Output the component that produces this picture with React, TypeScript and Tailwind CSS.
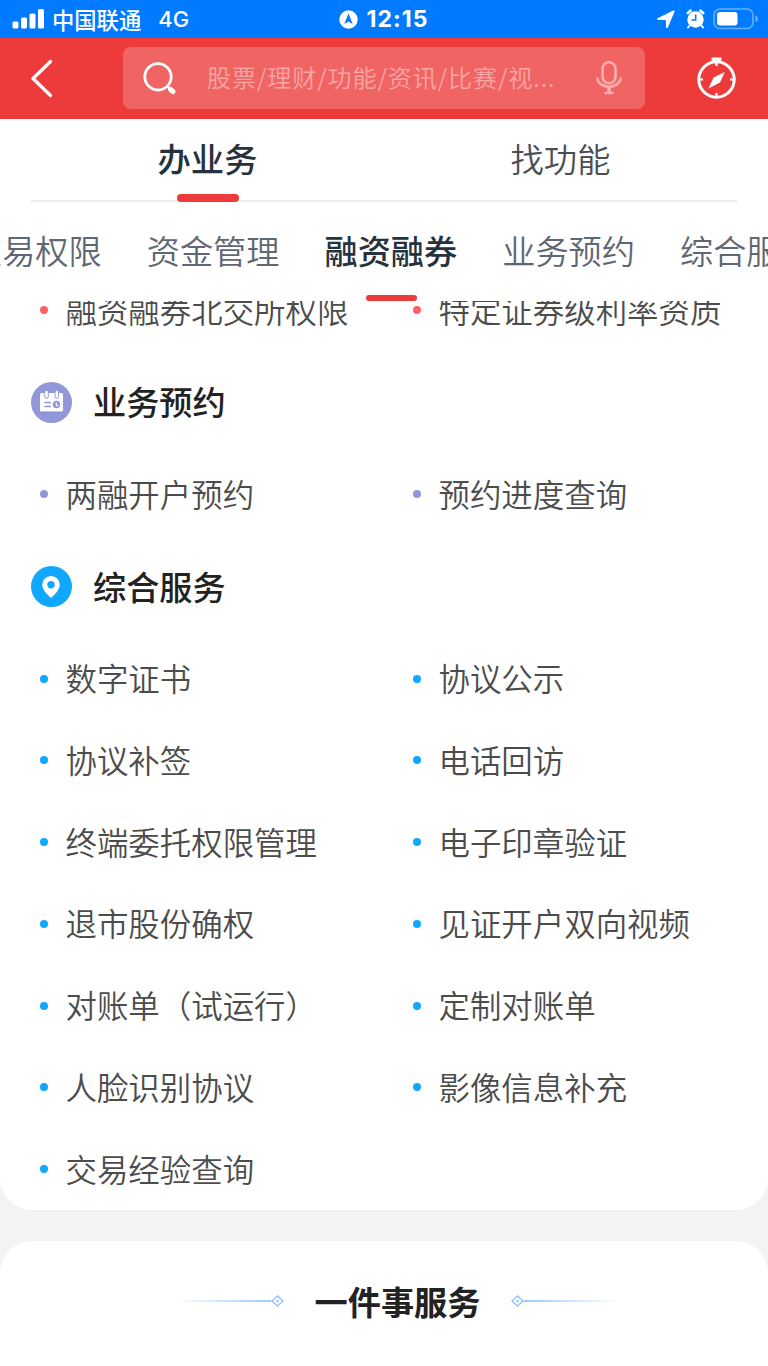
import clsx from "clsx"

type Section = {
  title: string
  dot: string
  icon: React.ReactNode
  items: string[]
}

const categories = ["交易权限", "资金管理", "融资融券", "业务预约", "综合服务"]

const CalendarIcon = () => (
  <svg width="41" height="41" viewBox="0 0 41 41" fill="none">
    <circle cx="20.5" cy="20.5" r="20.5" fill="#9197d8" />
    <rect x="10" y="13" width="22" height="18" rx="1.5" fill="#7c82c8" opacity="0.5" />
    <rect x="9" y="11" width="23" height="18.5" rx="1.5" fill="#fff" />
    <path d="M15.5 11v3.500M25.800 11v3.500" stroke="#9197d8" strokeWidth="4.400" strokeLinecap="round" />
    <path d="M15.500 10v4.500M25.800 10v4.500" stroke="#fff" strokeWidth="2.600" strokeLinecap="round" />
    <path d="M14 20.500h5.200M14 24.500h5.200" stroke="#9197d8" strokeWidth="1.700" strokeLinecap="round" />
    <circle cx="25.500" cy="22.500" r="3.700" fill="#9197d8" />
    <path d="M25.200 20.300v2.400l1.900 1.500" stroke="#fff" strokeWidth="1.100" />
  </svg>
)

const PinIcon = () => (
  <svg width="41" height="41" viewBox="0 0 41 41" fill="none">
    <circle cx="20.500" cy="20.500" r="20.500" fill="#10a8fe" />
    <path d="M20 32c-2.200-2-8.800-8-8.800-13.300a8.800 8.800 0 0 1 17.600 0C28.800 24 22.200 30 20 32z" fill="#fff" />
    <circle cx="20" cy="18.700" r="3.700" fill="#10a8fe" />
  </svg>
)

const sections: Section[] = [
  {
    title: "业务预约",
    dot: "bg-[#9197d8]",
    icon: <CalendarIcon />,
    items: ["两融开户预约", "预约进度查询"],
  },
  {
    title: "综合服务",
    dot: "bg-[#10a8fe]",
    icon: <PinIcon />,
    items: [
      "数字证书",
      "协议公示",
      "协议补签",
      "电话回访",
      "终端委托权限管理",
      "电子印章验证",
      "退市股份确权",
      "见证开户双向视频",
      "对账单（试运行）",
      "定制对账单",
      "人脸识别协议",
      "影像信息补充",
      "交易经验查询",
    ],
  },
]

function StatusBar() {
  return (
    <div className="grid h-[38px] grid-cols-3 items-center bg-[#007aff] text-white">
      <div className="flex items-center pl-3">
        <svg width="32" height="20" viewBox="0 0 32 20" fill="#fff">
          <rect x="0.500" y="12.500" width="6" height="7" rx="1.500" />
          <rect x="9" y="8.500" width="6" height="11" rx="1.500" />
          <rect x="17.500" y="4.500" width="6" height="15" rx="1.500" />
          <rect x="26" y="0" width="6" height="19.500" rx="1.500" />
        </svg>
        <span className="ml-2 text-[22.300px] leading-[38px] font-medium">中国联通</span>
        <span className="ml-[17px] font-['Inter','Noto_Sans_CJK_SC',sans-serif] text-[22px] font-medium">4G</span>
      </div>
      <div className="flex items-center justify-center">
        <svg width="19" height="19" viewBox="0 0 19 19">
          <circle cx="9.500" cy="9.500" r="9.200" fill="#fff" />
          <path d="M9.500 3.500 13.700 14 9.500 11.400 5.300 14z" fill="#007aff" />
        </svg>
        <span className="ml-2 font-['Inter','Noto_Sans_CJK_SC',sans-serif] text-[23px] font-bold tracking-[1.100px]">
          12:15
        </span>
      </div>
      <div className="flex items-center justify-end pr-[10px]">
        <svg width="18" height="18" viewBox="0 0 18 18" fill="#fff" stroke="#fff" strokeWidth="1.800" strokeLinejoin="round">
          <path d="M16.700 1.300 1 9l8.600.2.400 8z" />
        </svg>
        <svg className="ml-[11px]" width="19" height="20" viewBox="0 0 19 20" fill="none">
          <circle cx="9.500" cy="10.500" r="8.200" fill="#fff" />
          <path d="M1.800 4 4.500 1.700M17.200 4 14.500 1.700" stroke="#fff" strokeWidth="2.600" strokeLinecap="round" />
          <path d="m4 16-2 2.500M15 16l2 2.500" stroke="#fff" strokeWidth="2" strokeLinecap="round" />
          <path d="M9.700 5.500V11H5.500" stroke="#007aff" strokeWidth="1.500" />
        </svg>
        <svg className="ml-[8px]" width="45" height="22" viewBox="0 0 45 22" fill="none">
          <rect x="1" y="1" width="39" height="19.500" rx="6" stroke="#fff" strokeOpacity="0.400" strokeWidth="1.600" />
          <rect x="4" y="4" width="20.500" height="13.500" rx="3" fill="#fff" />
          <path d="M42.500 7.500c3 1 3 5.500 0 6.500z" fill="#fff" fillOpacity="0.450" />
        </svg>
      </div>
    </div>
  )
}

function SearchHeader() {
  return (
    <header className="flex h-[81px] items-center bg-[#ed3b3b] pb-px">
      <svg className="ml-[30px]" width="23" height="40" viewBox="0 0 23 40" fill="none">
        <path d="M20.500 3.500 3 20.500l17.500 17" stroke="#fff" strokeWidth="3.400" strokeLinecap="round" strokeLinejoin="round" />
      </svg>
      <div className="ml-[70px] flex h-[62px] w-[522px] items-center rounded-lg bg-[#f06464]">
        <svg className="mt-px ml-5" width="34" height="34" viewBox="0 0 34 34" fill="none">
          <circle cx="15" cy="14.800" r="13.200" stroke="#fff" strokeWidth="2.800" />
          <path d="m24.500 24.500 2 2" stroke="#fff" strokeWidth="2.400" />
          <path d="m27.500 27.300 2.500 2.200" stroke="#fff" strokeWidth="5" strokeLinecap="round" />
        </svg>
        <span className="mb-[3px] ml-[30px] w-[350px] text-[24px] leading-[58px] font-[350] tracking-[0.950px] whitespace-nowrap text-[#f8a6a6]">
          股票/理财/功能/资讯/比赛/视...
        </span>
        <svg className="ml-[38px]" width="28" height="36" viewBox="0 0 28 36" fill="none" stroke="#f8aeae" strokeWidth="2.600">
          <rect x="7.500" y="2.300" width="13" height="21" rx="6.500" />
          <path d="M2.300 18.500a11.800 9.500 0 0 0 23.400 0" strokeLinecap="round" />
          <path d="M14 27.500v5" strokeWidth="3.500" />
          <path d="M10.500 33h7" strokeLinecap="round" />
        </svg>
      </div>
      <svg className="ml-[52px]" width="40" height="44" viewBox="0 0 40 44" fill="none">
        <circle cx="19.500" cy="23.500" r="17.700" stroke="#fff" strokeWidth="3" />
        <path d="M14.500 3h10" stroke="#fff" strokeWidth="3" />
        <path d="M15.800 5h7.400" stroke="#fff" strokeWidth="2.500" />
        <path d="M19.500 5v5M19.500 37v5M2 23.500h4M33 23.500h4" stroke="#fff" strokeWidth="2.200" />
        <path d="M27.800 16 23 26.500 11.500 32.500l5-11z" fill="#fff" />
      </svg>
    </header>
  )
}

function MainTabs() {
  return (
    <div className="mx-[31px] flex h-[83px] justify-around border-b-2 border-[#ebebeb] text-[33.300px] text-[#4a4f57]">
      <div className="relative flex w-1/2 justify-center leading-[78px] font-medium text-[#26323e]">
        办业务
        <span className="absolute -bottom-0.5 left-[146px] h-2 w-[62px] rounded-full bg-[#ed3b3b]" />
      </div>
      <div className="flex w-1/2 justify-center leading-[78px] font-[350]">找功能</div>
    </div>
  )
}

function CategoryTabs() {
  return (
    <nav className="flex h-[99px] overflow-hidden">
      <div className="-ml-[31px] flex shrink-0 gap-[45px] text-[33.200px] leading-[95px] text-[#606774]">
        {categories.map((name) => {
          const active = name === "融资融券"
          return (
            <div key={name} className={clsx("relative whitespace-nowrap", active ? "font-medium text-[#26323e]" : "font-[350]")}>
              {name}
              {active && <span className="absolute bottom-0 left-[41px] h-[6px] w-[51px] rounded-full bg-[#ed3b3b]" />}
            </div>
          )
        })}
      </div>
    </nav>
  )
}

function Item({ name, dot }: { name: string; dot: string }) {
  return (
    <div className="flex h-[81.750px] items-center">
      <span className={clsx("mr-[17.500px] size-2 shrink-0 rounded-full", dot)} />
      <span className="mb-px text-[31.450px] leading-[48px] font-[350] whitespace-nowrap text-[#4c4c4c]">{name}</span>
    </div>
  )
}

function SectionBlock({ title, dot, icon, items }: Section) {
  return (
    <section>
      <div className="flex h-[102.500px] items-center pl-[31px]">
        {icon}
        <h2 className="mb-0.5 ml-[21px] text-[33.200px] leading-[50px] font-medium text-[#222]">{title}</h2>
      </div>
      <div className="grid grid-cols-[373px_1fr] pl-10">
        {items.map((name) => (
          <Item key={name} name={name} dot={dot} />
        ))}
      </div>
    </section>
  )
}

const TitleLine = ({ flip = false }: { flip?: boolean }) => (
  <div className={clsx("flex items-center", flip && "rotate-180")}>
    <span className="h-[2px] w-[96px] bg-linear-to-r from-white to-[#9ccaff]" />
    <svg width="13" height="12" viewBox="0 0 13 12" fill="none">
      <path d="M1 6 6.500 1 12 6 6.500 11z" stroke="#8ec2ff" strokeWidth="1.300" />
      <circle cx="6.500" cy="6" r="1" fill="#5ea8ff" />
    </svg>
  </div>
)

export default function App() {
  return (
    <div className="h-[1366px] w-[768px] overflow-hidden bg-[#f3f3f3] font-['Noto_Sans_CJK_SC','Liberation_Sans',sans-serif]">
      <StatusBar />
      <SearchHeader />
      <main className="rounded-b-[32px] bg-white">
        <MainTabs />
        <CategoryTabs />
        {/* last row of the section scrolled under the tabs */}
        <div className="flex h-[50px] items-end overflow-hidden">
          <div className="grid grid-cols-[373px_1fr] pl-10">
            <Item name="融资融券北交所权限" dot="bg-[#ff6169]" />
            <Item name="特定证券级利率资质" dot="bg-[#ff6169]" />
          </div>
        </div>
        {sections.map((section) => (
          <SectionBlock key={section.title} {...section} />
        ))}
      </main>
      <div className="mt-[31px] flex h-[160px] items-start justify-center rounded-t-[32px] bg-white pt-[35px] pl-[27px]">
        <div className="flex items-center gap-[31px]">
          <TitleLine />
          <h2 className="text-[33.200px] leading-[50px] font-bold text-[#222]">一件事服务</h2>
          <TitleLine flip />
        </div>
      </div>
    </div>
  )
}
